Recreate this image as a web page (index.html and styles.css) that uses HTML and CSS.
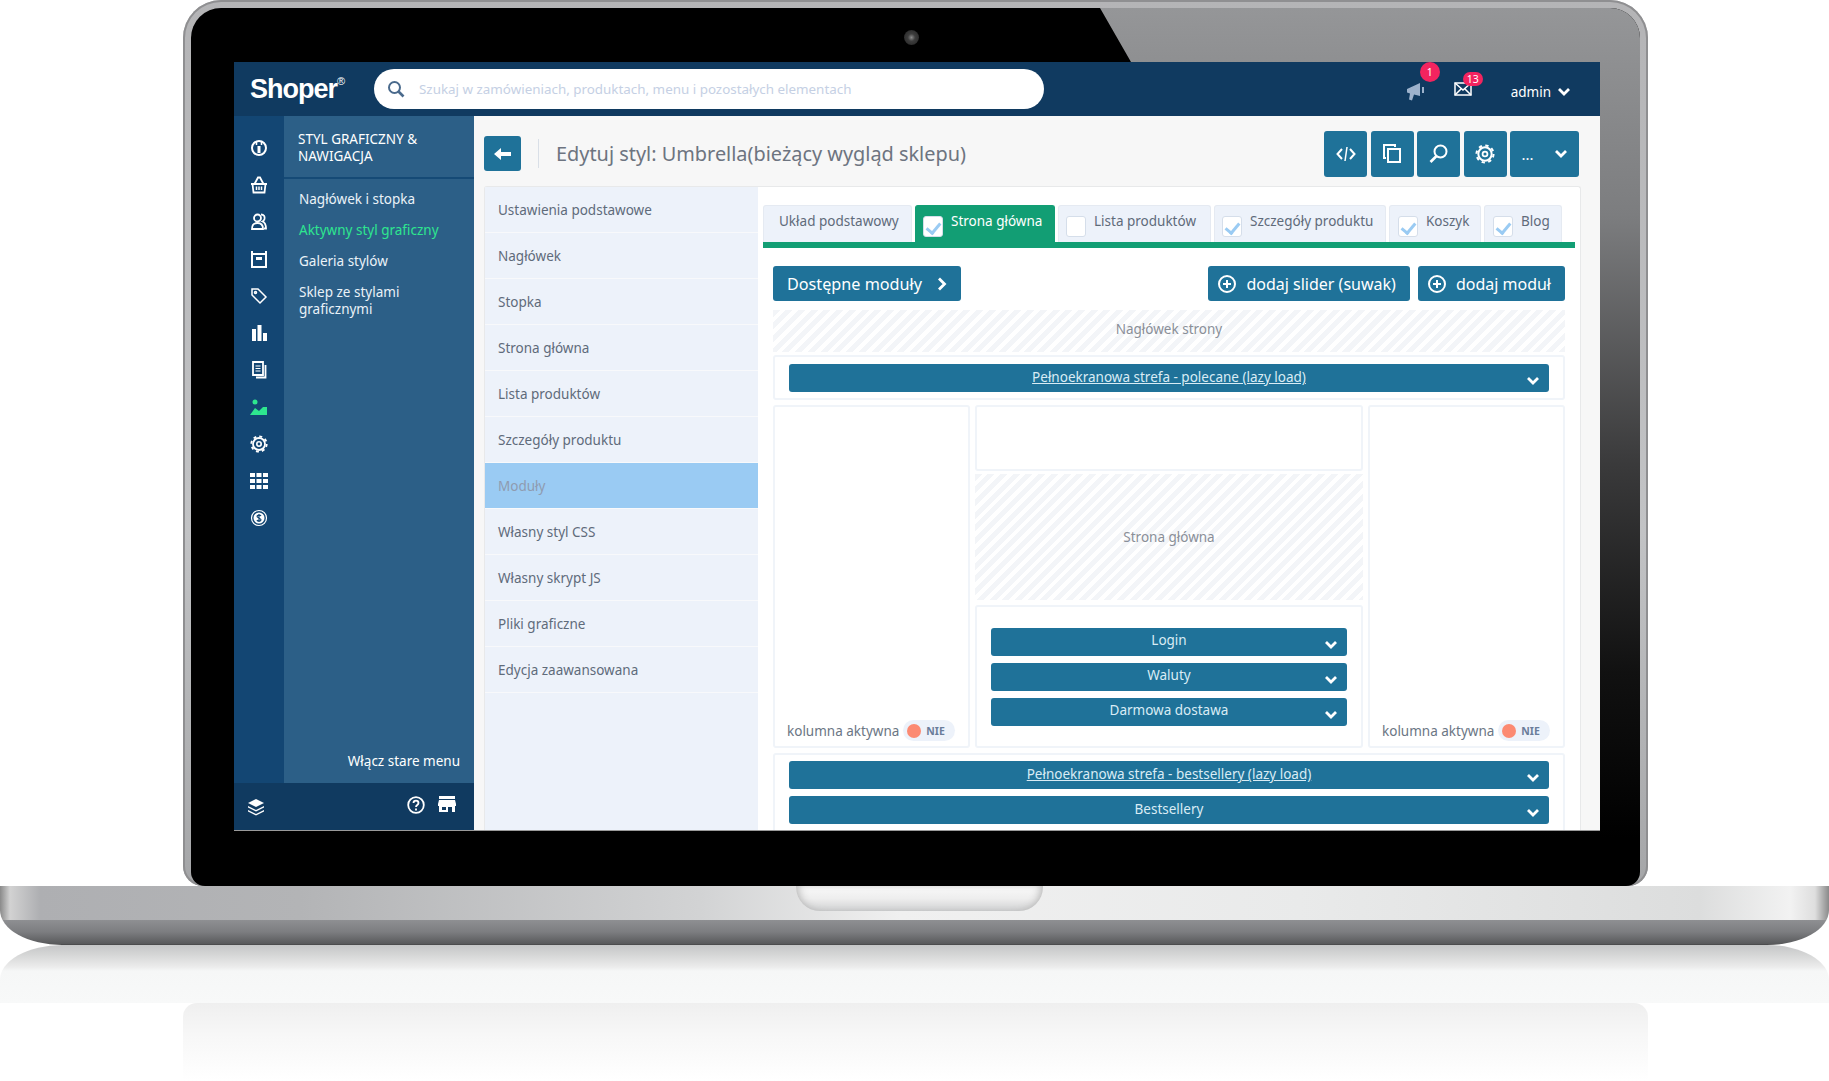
FILE: index.html
```html
<!DOCTYPE html>
<html lang="pl">

<head>
  <meta charset="UTF-8" />
  <meta name="viewport" content="width=device-width, initial-scale=1.0" />
  <title>Shoper – Edytuj styl</title>
  <link rel="stylesheet" href="styles.css">
</head>

<body>
  <svg class="sprite" width="0" height="0">
    <symbol id="chev" viewBox="0 0 14 10">
      <path d="M2 2l5 5 5-5" fill="none" stroke="currentColor" stroke-width="2.8" />
    </symbol>
    <symbol id="gear" viewBox="0 0 18 18">
      <g fill="none" stroke="#fff">
        <circle cx="9" cy="9" r="6" stroke-width="1.800" />
        <circle cx="9" cy="9" r="7.700" stroke-width="1.800" stroke-dasharray="3 3.050" />
        <circle cx="9" cy="9" r="2.200" stroke-width="1.600" />
      </g>
    </symbol>
  </svg>

  <div class="lid">
    <div class="bezel">
      <div class="glare"></div>
      <div class="camera"></div>

      <div class="screen">
        <header class="topbar">
          <div class="logo">Shoper<sup>®</sup></div>
          <div class="search">
            <svg width="18" height="18" viewBox="0 0 18 18" fill="none" stroke="#4a6a8c" stroke-width="2">
              <circle cx="7.5" cy="7.5" r="5.5" />
              <path d="M11.5 11.5l5 5" stroke-width="2.6" />
            </svg>
            <span>Szukaj w zamówieniach, produktach, menu i pozostałych elementach</span>
          </div>
          <div class="top-icons">
            <div class="top-icon notice">
              <svg width="22" height="22" viewBox="0 0 22 22" fill="#9db2cc">
                <path d="M1 8l13-6v13l-6-1.500-2 6-3-1 1-6-3-1z" />
                <rect x="16" y="6" width="2" height="6" />
              </svg>
              <b class="badge round">1</b>
            </div>
            <div class="top-icon mail">
              <svg width="18" height="14" viewBox="0 0 18 14" fill="none" stroke="#fff" stroke-width="1.500">
                <rect x="1" y="1" width="16" height="12" />
                <path d="M1 1l8 7 8-7M1 13l6-6M17 13l-6-6" />
              </svg>
              <b class="badge pill">13</b>
            </div>
            <div class="admin">admin <svg width="14" height="10"><use href="#chev" /></svg></div>
          </div>
        </header>

        <div class="app">
          <aside class="sidebar">
            <div class="columns">
              <nav class="rail">
                <svg viewBox="0 0 18 18" fill="none" stroke="#fff" stroke-width="2"><circle cx="9" cy="9" r="7" /><path d="M9 7v7" stroke-width="3" /><path d="M6.500 3v3M11.500 3v3" stroke-width="1.500" /></svg>
                <svg viewBox="0 0 18 18" fill="none" stroke="#fff" stroke-width="1.800"><path d="M4.500 8L8 1.500h2L13.500 8" /><path d="M1 8h16M2.500 8l1 8.500h11l1-8.500" /><path d="M6.500 10.500v3.500M9 10.500v3.500M11.500 10.500v3.500" stroke-width="1.500" /></svg>
                <svg viewBox="0 0 18 18" fill="none" stroke="#fff" stroke-width="1.800"><circle cx="7.500" cy="5" r="3.500" /><path d="M2 16c0-4 2-6 5.500-6S13 12 13 16z" /><path d="M11 1.500c3 0 4 2 3.500 4.500-.3 1-1 2-2 2.500 2.500 1 3.500 3 3.500 7h-2" /></svg>
                <svg viewBox="0 0 18 18" fill="none" stroke="#fff" stroke-width="2"><path d="M2 1v16h14V1M2 4h14" /><rect x="6" y="7" width="6" height="3" fill="#fff" stroke="none" /></svg>
                <svg viewBox="0 0 18 18" fill="none" stroke="#fff" stroke-width="1.500"><path d="M2 2h6l8 8-6 6-8-8z" /><circle cx="5.500" cy="5.500" r="1" /></svg>
                <svg viewBox="0 0 18 18" fill="#fff"><rect x="2" y="5" width="4" height="12" /><rect x="7.500" y="1" width="4" height="16" /><rect x="13" y="9" width="4" height="8" /></svg>
                <svg viewBox="0 0 18 18" fill="none" stroke="#fff" stroke-width="1.800"><path d="M3 1h10v13H3z" /><path d="M5.500 5h5M5.500 7.500h5M5.500 10h5" stroke-width="1.200" /><path d="M15.500 4v12.500H6" /></svg>
                <svg viewBox="0 0 18 18" fill="#2ee68f"><circle cx="5" cy="4" r="2.500" /><path d="M0 17l5-7 4 3 4-4h4v8z" /></svg>
                <svg><use href="#gear" /></svg>
                <svg viewBox="0 0 18 18" fill="#fff"><path d="M0 1h5v4H0zM6.500 1h5v4h-5zM13 1h5v4h-5zM0 7h5v4H0zM6.500 7h5v4h-5zM13 7h5v4h-5zM0 13h5v4H0zM6.500 13h5v4h-5zM13 13h5v4h-5z" /></svg>
                <svg viewBox="0 0 18 18" fill="none" stroke="#fff"><circle cx="9" cy="9" r="7.500" stroke-width="1.200" /><circle cx="9" cy="9" r="5.500" fill="#fff" stroke="none" /><path d="M11 7c-.5-1-3.500-1.500-4 .2S11 9 11 10.800 7.500 12.500 7 11M9 5v8" stroke="#134673" stroke-width="1.200" /></svg>
              </nav>
              <div class="submenu">
                <div class="submenu-title">STYL GRAFICZNY &amp; NAWIGACJA</div>
                <ul class="submenu-list">
                  <li>Nagłówek i stopka</li>
                  <li class="current">Aktywny styl graficzny</li>
                  <li>Galeria stylów</li>
                  <li>Sklep ze stylami graficznymi</li>
                </ul>
                <div class="old-menu">Włącz stare menu</div>
              </div>
            </div>
            <div class="sidebar-foot">
              <svg width="18" height="18" viewBox="0 0 18 18" fill="#fff"><path d="M9 1l8 4-8 4-8-4z" /><path d="M1 8l8 4 8-4v1.500l-8 4-8-4zM1 12l8 4 8-4v1.500l-8 4-8-4z" /></svg>
              <div class="foot-right">
                <svg width="18" height="18" viewBox="0 0 18 18" fill="none" stroke="#fff" stroke-width="1.800"><circle cx="9" cy="9" r="7.800" /><path d="M6.500 7c0-3.200 5-3.200 5 0 0 2-2.500 2-2.500 4" /><path d="M9 12.500v2" /></svg>
                <svg width="18" height="16" viewBox="0 0 18 16" fill="#fff"><rect x="1" y="0" width="16" height="3" /><path d="M1 4h16l1 4v2h-1v6h-3v-5h-4v5H1v-6H0V8zM4 11v3h4v-3z" fill-rule="evenodd" /></svg>
              </div>
            </div>
          </aside>

          <main class="content">
            <div class="toolbar">
              <button class="tool back">
                <svg width="18" height="14" viewBox="0 0 18 14" fill="#fff"><path d="M0 7l7-6v4h10v4H7v4z" /></svg>
              </button>
              <h1>Edytuj styl: Umbrella(bieżący wygląd sklepu)</h1>
              <div class="tools">
                <button class="tool">
                  <svg width="20" height="16" viewBox="0 0 20 16" fill="none" stroke="#fff" stroke-width="2"><path d="M6 3L1.500 8 6 13M14 3l4.500 5-4.500 5" /><path d="M11 1L9 15" stroke-width="1.500" /></svg>
                </button>
                <button class="tool">
                  <svg width="18" height="19" viewBox="0 0 18 19" fill="none" stroke="#fff" stroke-width="2"><rect x="5" y="5" width="12" height="13" /><path d="M3 14H1V1h11v2" /></svg>
                </button>
                <button class="tool">
                  <svg width="19" height="19" viewBox="0 0 19 19" fill="none" stroke="#fff" stroke-width="2"><circle cx="11.500" cy="7.500" r="6" /><path d="M7.500 12l-6 6" stroke-width="2.600" /></svg>
                </button>
                <button class="tool">
                  <svg width="20" height="20"><use href="#gear" /></svg>
                </button>
                <button class="tool more">... <svg width="14" height="10"><use href="#chev" /></svg></button>
              </div>
            </div>

            <div class="panel">
              <ul class="style-nav">
                <li>Ustawienia podstawowe</li>
                <li>Nagłówek</li>
                <li>Stopka</li>
                <li>Strona główna</li>
                <li>Lista produktów</li>
                <li>Szczegóły produktu</li>
                <li class="selected">Moduły</li>
                <li>Własny styl CSS</li>
                <li>Własny skrypt JS</li>
                <li>Pliki graficzne</li>
                <li>Edycja zaawansowana</li>
              </ul>

              <section class="editor">
                <div class="tabs">
                  <div class="tab tab-a">Układ podstawowy</div>
                  <div class="tab tab-b active"><span class="check on"></span>Strona główna</div>
                  <div class="tab tab-c"><span class="check"></span>Lista produktów</div>
                  <div class="tab tab-d"><span class="check on"></span>Szczegóły produktu</div>
                  <div class="tab tab-e"><span class="check on"></span>Koszyk</div>
                  <div class="tab tab-f"><span class="check on"></span>Blog</div>
                </div>

                <div class="actions">
                  <button class="action">Dostępne moduły
                    <svg width="10" height="14" viewBox="0 0 10 14" fill="none" stroke="#fff" stroke-width="2.800"><path d="M2 1.500L7.500 7 2 12.500" /></svg>
                  </button>
                  <div class="actions-right">
                    <button class="action"><span class="plus"></span>dodaj slider (suwak)</button>
                    <button class="action"><span class="plus"></span>dodaj moduł</button>
                  </div>
                </div>

                <div class="hatch page-head">Nagłówek strony</div>

                <div class="zone zone-top">
                  <div class="bar"><u>Pełnoekranowa strefa - polecane (lazy load)</u><svg width="14" height="10"><use href="#chev" /></svg></div>
                </div>

                <div class="layout">
                  <div class="zone side">
                    <div class="side-status">kolumna aktywna <span class="toggle"><i></i>NIE</span></div>
                  </div>
                  <div class="middle">
                    <div class="zone mid-top"></div>
                    <div class="hatch mid-main">Strona główna</div>
                    <div class="zone mid-mods">
                      <div class="bar"><span>Login</span><svg width="14" height="10"><use href="#chev" /></svg></div>
                      <div class="bar"><span>Waluty</span><svg width="14" height="10"><use href="#chev" /></svg></div>
                      <div class="bar"><span>Darmowa dostawa</span><svg width="14" height="10"><use href="#chev" /></svg></div>
                    </div>
                  </div>
                  <div class="zone side">
                    <div class="side-status">kolumna aktywna <span class="toggle"><i></i>NIE</span></div>
                  </div>
                </div>

                <div class="zone zone-bottom">
                  <div class="bar"><u>Pełnoekranowa strefa - bestsellery (lazy load)</u><svg width="14" height="10"><use href="#chev" /></svg></div>
                  <div class="bar"><span>Bestsellery</span><svg width="14" height="10"><use href="#chev" /></svg></div>
                </div>
              </section>
            </div>
          </main>
        </div>
      </div>
    </div>
  </div>

  <div class="base">
    <div class="notch"></div>
  </div>

  <div class="reflection">
    <div class="reflect-base"></div>
    <div class="reflect-lid"></div>
  </div>
</body>

</html>
```
FILE: styles.css
```css
* {
  box-sizing: border-box;
}

html,
body {
  margin: 0;
  height: 1081px;
  overflow: hidden;
  background: #fff;
}

body {
  font-family: 'Noto Sans', sans-serif;
  font-size: 13.5px;
  color: #5f6b7a;
}

.sprite {
  display: block;
  height: 0;
}

ul {
  list-style: none;
  margin: 0;
  padding: 0;
}

button {
  font-family: inherit;
  border: none;
  color: #fff;
  background: #1f7299;
  border-radius: 3px;
  padding: 0;
}

/* laptop */
.lid {
  width: 1465px;
  height: 886px;
  margin-left: 183px;
  padding: 8px 8px 0;
  background: linear-gradient(#b4b4b6, #c2c3c5 60%, #a5a6a8);
  border-radius: 38px 38px 20px 20px;
  box-shadow: inset 0 0 0 2px #8f8f91;
}

.bezel {
  position: relative;
  height: 878px;
  padding: 54px 40px 0 43px;
  background: #000;
  border-radius: 30px 30px 14px 14px;
  overflow: hidden;
}

.glare {
  position: absolute;
  top: 0;
  right: 0;
  width: 540px;
  height: 830px;
  background: linear-gradient(#959698, #7c7d7f 25%, #3a3a3b 55%, #111 80%, #000);
  clip-path: polygon(0 0, 100% 0, 100% 100%, 31px 100%, 31px 54px);
}

.camera {
  position: absolute;
  top: 22px;
  left: 713px;
  width: 15px;
  height: 15px;
  border-radius: 50%;
  background: radial-gradient(circle, #8a8a8a 0, #3d3d3d 35%, #333 60%, #151515 100%);
}

.screen {
  position: relative;
  width: 1366px;
  height: 769px;
  overflow: hidden;
  background: #f7f7f7;
  border-bottom: 1px solid #9a9a9a;
}

.base {
  position: relative;
  height: 59px;
  background:
    linear-gradient(transparent 34px, #8e8f92 34px, #7c7d80 46px, #58595b 58px, #3f3f40 59px),
    linear-gradient(90deg, #8a8a8a 0, #d2d2d2 10px, #aeafb2 40px, #b3b4b6 300px, #d2d3d4 700px, #f0f0f0 900px, #e9eaea 1300px, #dcdddd 1700px, #f2f2f2 1790px, #dedede 1815px, #8a8a8a 1829px);
  border-radius: 0 0 62px 62px / 0 0 35px 35px;
}

.notch {
  position: absolute;
  top: 0;
  left: 796px;
  width: 247px;
  height: 25px;
  background: linear-gradient(#f9f9f9, #eeeeee 50%, #d0d1d2);
  border-radius: 0 0 24px 24px;
  box-shadow: inset 6px 0 8px -4px #b5b5b5, inset -6px 0 8px -4px #b5b5b5;
}

.reflection {
  height: 136px;
}

.reflect-base {
  height: 58px;
  background: linear-gradient(#c5c6c7, #d2d3d3 8px, #ececec 22px, #f6f7f7 26px, #f8f9f9 58px);
  border-radius: 62px 62px 0 0 / 35px 35px 0 0;
}

.reflect-lid {
  width: 1465px;
  height: 78px;
  margin-left: 183px;
  background: linear-gradient(#efefef, #f7f7f7 40%, #fff);
  border-radius: 14px 14px 0 0;
}

/* topbar */
.topbar {
  display: flex;
  align-items: center;
  height: 54px;
  padding-left: 16px;
  background: #103a60;
}

.logo {
  width: 124px;
  font-family: 'Liberation Sans', sans-serif;
  font-size: 27px;
  font-weight: bold;
  letter-spacing: -1px;
  color: #fff;
}

.logo sup {
  font-size: 11px;
  font-weight: normal;
  letter-spacing: 0;
  vertical-align: 13px;
  line-height: 0;
}

.search {
  display: flex;
  align-items: center;
  gap: 14px;
  width: 670px;
  height: 40px;
  padding-left: 13px;
  background: #fff;
  border-radius: 20px;
  color: #c5d0e4;
  font-size: 13.4px;
}

.top-icons {
  display: flex;
  align-items: center;
  margin-left: auto;
  padding-right: 29px;
}

.top-icon {
  position: relative;
  display: flex;
}

.notice {
  margin-right: 26px;
  margin-top: 6px;
}

.mail {
  margin-right: 39px;
  margin-top: 0;
}

.badge {
  position: absolute;
  display: flex;
  align-items: center;
  justify-content: center;
  background: #f3245f;
  color: #fff;
  font-size: 10.5px;
  font-weight: normal;
  border-radius: 10px;
}

.badge.round {
  top: -19px;
  left: 14px;
  width: 20px;
  height: 20px;
}

.badge.pill {
  top: -10px;
  left: 9px;
  width: 20px;
  height: 14px;
}

.admin {
  display: flex;
  align-items: center;
  gap: 6px;
  color: #fff;
  font-size: 13.5px;
  margin-top: 5px;
}

.admin svg {
  color: #fff;
}

/* sidebar */
.app {
  display: flex;
  height: 714px;
}

.sidebar {
  display: flex;
  flex-direction: column;
  width: 241px;
}

.columns {
  display: flex;
  flex: 1;
}

.rail {
  display: flex;
  flex-direction: column;
  align-items: center;
  gap: 19px;
  width: 50px;
  padding-top: 23px;
  background: #134673;
}

.rail svg {
  display: block;
  width: 18px;
  height: 18px;
}

.submenu {
  display: flex;
  flex-direction: column;
  flex: 1;
  background: #2c5f87;
  color: #eaf2f8;
}

.submenu-title {
  height: 63px;
  padding: 15px 40px 0 14px;
  line-height: 17px;
  color: #fff;
  border-bottom: 2px solid #154a76;
}

.submenu-list {
  padding: 7px 30px 0 15px;
  line-height: 17px;
}

.submenu-list li {
  margin: 5px 0 14px;
}

.submenu-list .current {
  color: #2ee68f;
}

.old-menu {
  margin-top: auto;
  padding: 0 14px 13px 0;
  text-align: right;
  color: #fff;
}

.sidebar-foot {
  display: flex;
  justify-content: space-between;
  align-items: center;
  height: 47px;
  padding: 0 18px 0 13px;
  background: #103a60;
}

.foot-right {
  display: flex;
  gap: 13px;
  margin-top: -4px;
}

/* main */
.content {
  flex: 1;
  padding: 0 19px 0 10px;
  background: #f7f7f7;
}

.toolbar {
  display: flex;
  align-items: center;
  height: 70px;
  padding-top: 5px;
}

.tool {
  display: flex;
  align-items: center;
  justify-content: center;
  width: 43px;
  height: 46px;
}

.tool.back {
  width: 37px;
  height: 35px;
}

.toolbar h1 {
  margin: 0 0 0 17px;
  padding-left: 17px;
  border-left: 1px solid #d9dfe7;
  font-size: 19.9px;
  font-weight: normal;
  line-height: 29px;
  color: #6d7480;
}

.tools {
  display: flex;
  gap: 3.500px;
  margin: 0 2px 0 auto;
}

.tool.more {
  width: 69px;
  gap: 20px;
  font-size: 15px;
}

.panel {
  display: flex;
  height: 644px;
  background: #fff;
  border: 1px solid #e8e9ea;
  border-bottom: none;
  border-radius: 3px 3px 0 0;
}

.style-nav {
  width: 273px;
  background: #edf2fa;
}

.style-nav li {
  height: 46px;
  padding: 14px 13px 0 13px;
  line-height: 18px;
  border-bottom: 1px solid #f8f9fb;
}

.style-nav .selected {
  background: #9acbf3;
  color: #8f9bb0;
}

.editor {
  flex: 1;
  min-width: 0;
  height: 644px;
  overflow: hidden;
  padding-top: 18px;
}

.tabs {
  display: flex;
  gap: 3px;
  margin: 0 5px;
  padding-bottom: 6px;
  background: linear-gradient(transparent 37px, #129e74 37px);
}

.tab {
  position: relative;
  display: flex;
  height: 37px;
  padding: 6px 0 0 12px;
  gap: 8px;
  line-height: 18px;
  background: #edf2fa;
  border: 1px solid #e5eaf2;
  border-bottom: none;
  border-radius: 3px 3px 0 0;
  white-space: nowrap;
}

.tab-a {
  width: 149px;
  padding-left: 15px;
}

.tab-b {
  width: 140px;
}

.tab-c {
  width: 153px;
  padding-left: 7px;
}

.tab-d {
  width: 172px;
  padding-left: 7px;
}

.tab-e {
  width: 92px;
  padding-left: 8px;
}

.tab-f {
  width: 78px;
  padding-left: 8px;
}

.tab.active {
  background: #129e74;
  border-color: #129e74;
  color: #fff;
  padding-left: 7px;
}

.check {
  position: relative;
  flex: none;
  width: 20px;
  height: 21px;
  margin-top: 4px;
  background: #fff;
  border: 1px solid #d5deea;
  border-radius: 3px;
}

.check.on::after {
  content: '';
  position: absolute;
  left: 5px;
  top: 3px;
  width: 6px;
  height: 11px;
  border: solid #9acbf3;
  border-width: 0 3px 3px 0;
  transform: rotate(40deg);
}

.actions {
  display: flex;
  justify-content: space-between;
  margin: 18px 15px 9px;
}

.actions-right {
  display: flex;
  gap: 8px;
}

.action {
  display: flex;
  align-items: center;
  height: 35px;
  padding: 0 14px;
  gap: 15px;
  font-size: 16.2px;
  white-space: nowrap;
}

.actions-right .action {
  gap: 10px;
  font-size: 16px;
  padding: 0 14px 0 10px;
}

.plus {
  position: relative;
  width: 18px;
  height: 18px;
  border: 2px solid #fff;
  border-radius: 50%;
}

.plus::before {
  content: '';
  position: absolute;
  top: 6px;
  left: 3px;
  width: 8px;
  height: 2px;
  background: #fff;
}

.plus::after {
  content: '';
  position: absolute;
  top: 3px;
  left: 6px;
  width: 2px;
  height: 8px;
  background: #fff;
}

.hatch {
  display: flex;
  align-items: center;
  justify-content: center;
  color: #8a8f98;
  background: repeating-linear-gradient(135deg, #f3f5f8 0, #f3f5f8 5px, #fff 5px, #fff 9px);
}

.page-head {
  height: 42px;
  margin: 0 15px 3px;
  padding-bottom: 4px;
}

.zone {
  background: #fff;
  border: 2px solid #f0f4f9;
  border-radius: 3px;
}

.zone-top {
  height: 45px;
  margin: 0 15px 5px;
  padding: 7px 14px;
}

.bar {
  display: grid;
  grid-template-columns: 1fr auto 1fr;
  height: 28px;
  padding: 0 9px;
  background: #1f7299;
  border-radius: 3px;
  color: #d9ecf5;
  line-height: 26px;
}

.bar u,
.bar span {
  grid-column: 2;
}

.bar svg {
  grid-column: 3;
  justify-self: end;
  margin-top: 12px;
  color: #fff;
}

.layout {
  display: grid;
  grid-template-columns: 197px 388px 197px;
  gap: 5px;
  height: 343px;
  margin: 0 15px 5px;
}

.side {
  display: flex;
  align-items: flex-end;
  padding: 0 0 5px 12px;
}

.side-status {
  display: flex;
  align-items: center;
  gap: 4px;
  white-space: nowrap;
  color: #6b7684;
}

.toggle {
  display: flex;
  align-items: center;
  gap: 5px;
  height: 21px;
  padding: 0 10px 0 4px;
  background: #edf2fa;
  border-radius: 11px;
  font-size: 10.5px;
  font-weight: bold;
  color: #6a7d9a;
}

.toggle i {
  width: 14px;
  height: 14px;
  background: #fc8a72;
  border-radius: 50%;
}

.middle {
  display: flex;
  flex-direction: column;
}

.mid-top {
  height: 66px;
  margin-bottom: 3px;
}

.mid-main {
  height: 126px;
  margin-bottom: 5px;
}

.mid-mods {
  flex: 1;
  display: flex;
  flex-direction: column;
  gap: 7px;
  padding: 21px 14px 0;
}

.mid-mods .bar {
  line-height: 24px;
}

.zone-bottom {
  display: flex;
  flex-direction: column;
  gap: 7px;
  height: 90px;
  margin: 0 15px;
  padding: 6px 14px;
}
```
